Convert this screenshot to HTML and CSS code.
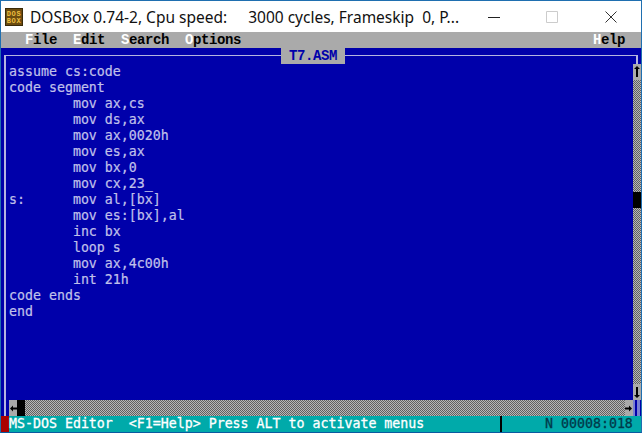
FILE: index.html
```html
<!DOCTYPE html>
<html lang="en">
<head>
<meta charset="utf-8">
<title>DOSBox</title>
<link rel="stylesheet" href="styles.css">
</head>
<body>
<div class="window">
  <header class="titlebar">
    <svg class="appicon" width="18" height="18" viewBox="0 0 18 18">
      <rect width="18" height="18" fill="#3a2a08"/>
      <rect x="1" y="1" width="16" height="16" fill="#6b4c10"/>
      <text class="icontext" x="9" y="8">DOS</text>
      <text class="icontext" x="9" y="15">BOX</text>
    </svg>
    <span class="title">DOSBox 0.74-2, Cpu speed:</span>
    <span class="title cycles">3000 cycles, Frameskip&nbsp; 0, P...</span>
    <div class="controls">
      <svg width="12" height="12" viewBox="0 0 12 12"><path d="M0 6.5h12" stroke="#222" fill="none"/></svg>
      <svg width="12" height="12" viewBox="0 0 12 12"><path d="M.5.5h11v11H.5z" stroke="#ccc" fill="none"/></svg>
      <svg class="closeicon" width="12" height="12" viewBox="0 0 12 12"><path d="M.5.5l11 11M11.5.5l-11 11" stroke="#333" fill="none"/></svg>
    </div>
  </header>

  <nav class="menubar">
    <span class="menu"><b class="hot">F</b>ile</span>
    <span class="menu"><b class="hot">E</b>dit</span>
    <span class="menu"><b class="hot">S</b>earch</span>
    <span class="menu"><b class="hot">O</b>ptions</span>
    <span class="menu help"><b class="hot">H</b>elp</span>
  </nav>

  <div class="frametop">
    <div class="seg seg-left"></div>
    <div class="tab">T7.ASM</div>
    <div class="seg seg-right"></div>
  </div>

  <main class="editor">
    <div class="gutter"></div>
    <pre class="code">assume cs:code
code segment
        mov ax,cs
        mov ds,ax
        mov ax,0020h
        mov es,ax
        mov bx,0
        mov cx,23_
s:      mov al,[bx]
        mov es:[bx],al
        inc bx
        loop s
        mov ax,4c00h
        int 21h
code ends
end</pre>
    <div class="vscroll">
      <div class="arrow"><svg width="8" height="16" viewBox="0 0 8 16"><path d="M3 13V5H1l3-3 3 3H5v8z" fill="#000"/></svg></div>
      <div class="track track-a"></div>
      <div class="thumb"></div>
      <div class="track"></div>
      <div class="arrow"><svg width="8" height="16" viewBox="0 0 8 16"><path d="M3 3v8H1l3 3 3-3H5V3z" fill="#000"/></svg></div>
    </div>
  </main>

  <div class="hrow">
    <div class="gutter"></div>
    <div class="hscroll">
      <div class="harrow"><svg width="8" height="16" viewBox="0 0 8 16"><path d="M1 8.5l3-3v2h4v2H4v2z" fill="#000"/></svg></div>
      <div class="hthumb"></div>
      <div class="track"></div>
      <div class="harrow"><svg width="8" height="16" viewBox="0 0 8 16"><path d="M7 8.5l-3-3v2H0v2h4v2z" fill="#000"/></svg></div>
    </div>
    <div class="corner"></div>
  </div>

  <footer class="status">
    <span class="flag"></span>
    <span class="msg">MS-DOS Editor  &lt;F1=Help&gt; Press ALT to activate menus</span>
    <span class="divider"></span>
    <span class="pos">N 00008:018</span>
  </footer>
</div>
</body>
</html>
```
FILE: styles.css
```css
* { box-sizing: border-box; }
html, body { margin: 0; padding: 0; }
body { width: 642px; height: 433px; overflow: hidden; background: #0000aa; }
.window {
  display: flex; flex-direction: column;
  width: 642px; height: 433px;
  border: 1px solid #1f6fb0;
  border-bottom-color: #0a5aa0;
  font: bold 14px/16px "Liberation Mono", monospace;
  letter-spacing: -0.4px;
  background: #0000aa;
}
.titlebar {
  display: flex; align-items: center;
  height: 31px; flex: none;
  background: #fff;
  padding: 0 0 0 4px;
  font-family: "Noto Sans", sans-serif;
  font-weight: normal; letter-spacing: 0;
  font-size: 15.5px; color: #111;
}
.appicon { flex: none; margin-right: 7px; }
.icontext {
  font: bold 7px "Liberation Mono", monospace;
  fill: #f0c040; text-anchor: middle; letter-spacing: 0.6px;
}
.title { white-space: pre; }
.cycles { margin-left: 21px; }
.controls { margin-left: auto; display: flex; gap: 46px; padding-right: 24px; }
.closeicon { margin-left: 1px; }
.menubar {
  display: flex; height: 16px; flex: none;
  background: #aaaaaa; color: #000;
  padding-left: 24px; gap: 16px;
}
.hot { color: #fff; }
.help { margin-left: auto; margin-right: 16px; }
.frametop { display: flex; height: 16px; flex: none; }
.seg { flex: none; height: 9px; margin-top: 7px; border-top: 1px solid #b4b4e0; }
.seg-left { width: 277px; margin-left: 3px; border-left: 2px solid #b4b4e0; }
.seg-right { width: 293px; border-right: 2px solid #b4b4e0; }
.tab {
  width: 64px; flex: none; text-align: center;
  background: #aaaaaa; color: #0000aa;
}
.editor { display: flex; height: 336px; flex: none; }
.gutter { width: 8px; flex: none; }
.gutter::before {
  content: ""; display: block; width: 2px; height: 100%;
  margin-left: 3px; background: #b4b4e0;
}
.code {
  flex: 1; margin: 0;
  font: 13.28px/16px "DejaVu Sans Mono", monospace; letter-spacing: 0;
  color: #c0c0ea;
  -webkit-text-stroke: 0.2px #c0c0ea;
}
.vscroll { width: 8px; flex: none; display: flex; flex-direction: column; }
.arrow { height: 16px; flex: none; background: #aaaaaa; }
.arrow svg, .harrow svg { display: block; }
.track {
  flex: 1;
  background: repeating-conic-gradient(#606060 0 25%, #b8b8b8 0 50%) 0 0 / 2px 2px;
}
.track-a { flex: none; height: 112px; }
.thumb { height: 16px; flex: none; background: #000; }
.hrow { display: flex; height: 16px; flex: none; }
.hscroll { display: flex; flex: 1; }
.harrow { width: 8px; flex: none; background: #aaaaaa; }
.hthumb { width: 8px; flex: none; background: #000; }
.corner {
  width: 8px; flex: none;
  background: linear-gradient(90deg, #7a80d0 0 2px, #0000aa 2px 4px, #7a80d0 4px 7px, #0000aa 7px);
}
.status {
  display: flex; height: 16px; flex: none;
  background: #00aaaa; color: #fff;
  font: 13.28px/16px "DejaVu Sans Mono", monospace; letter-spacing: 0;
  -webkit-text-stroke: 0.3px currentColor;
}
.flag { width: 8px; flex: none; background: #aa0000; }
.msg { white-space: pre; width: 491px; flex: none; }
.divider { width: 2px; flex: none; background: #000; }
.pos { margin-left: 43px; color: #003a4a; }
```
